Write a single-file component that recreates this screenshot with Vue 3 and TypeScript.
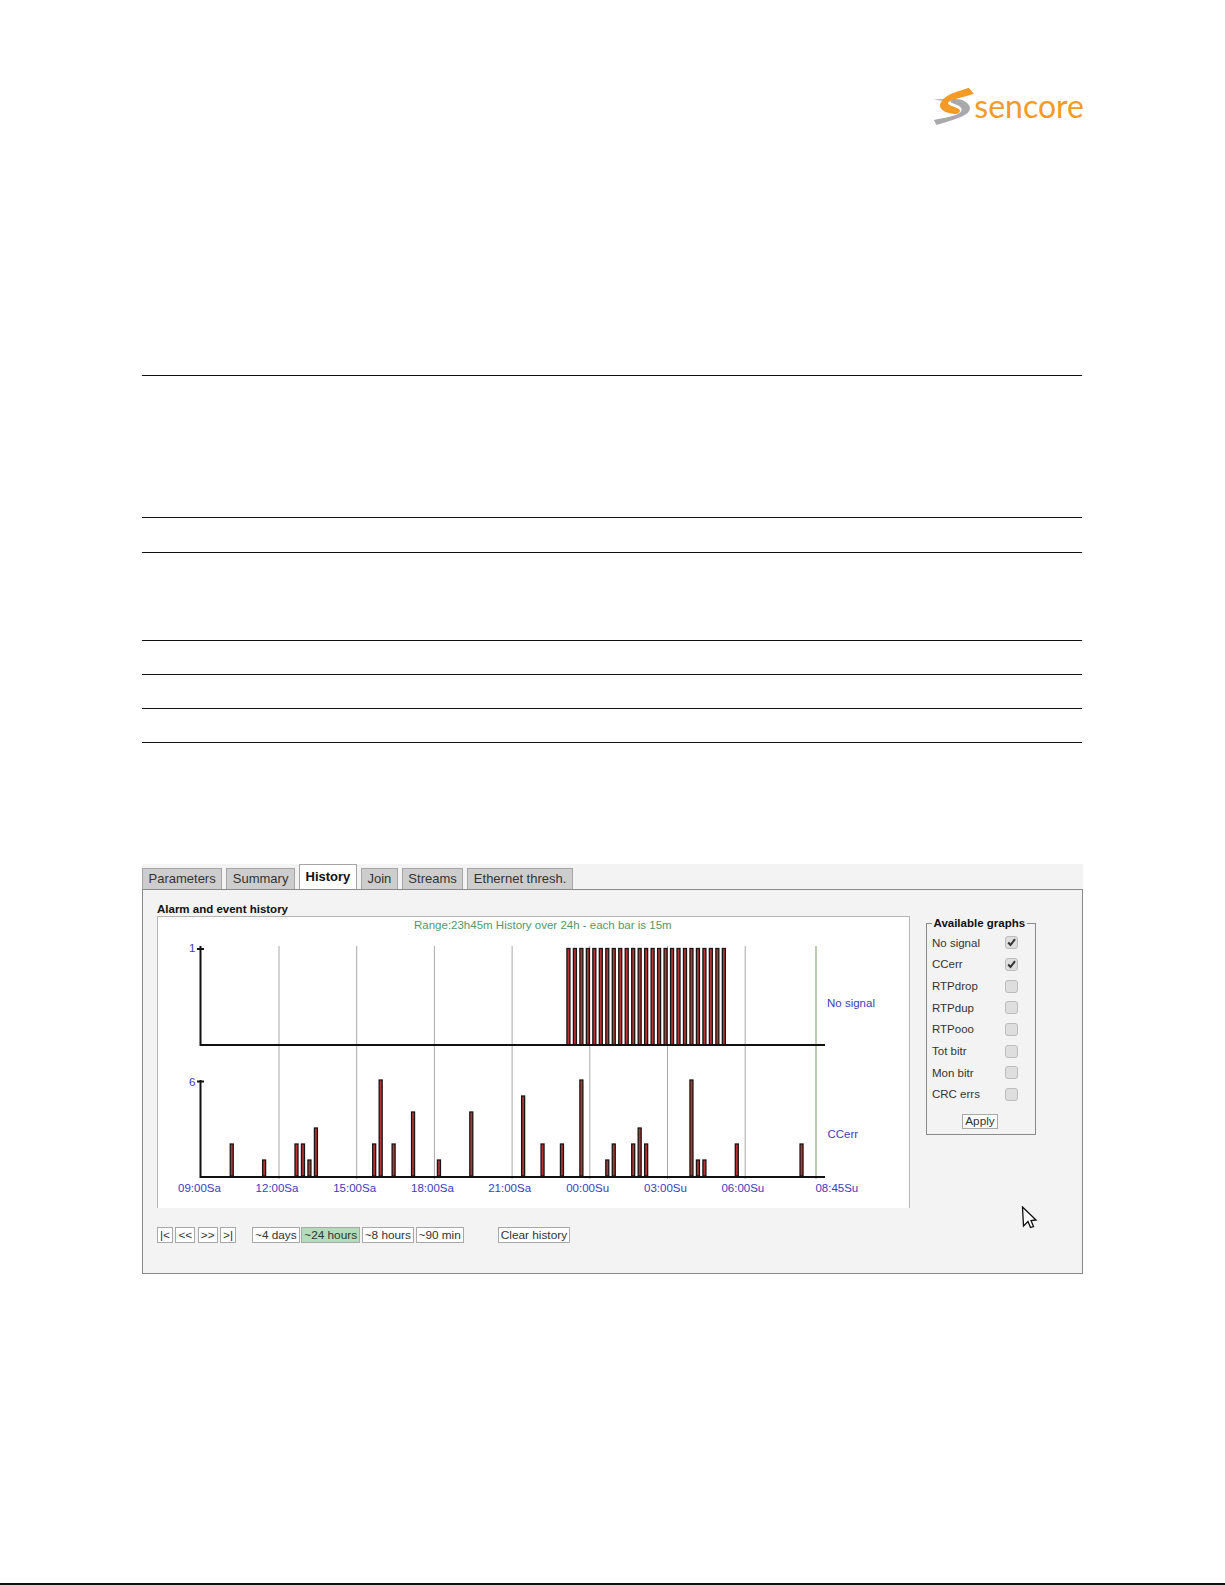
<script setup lang="ts">
// one slot on the time axis is 15 minutes, 3 hours = 77.7px
const slot = 6.475
const axisX = 42.5
const slotX = (n: number) => axisX + slot * (n + 0.5)

const rules = [142, 35, 88, 34, 34, 34]
const tabs = ['Parameters', 'Summary', 'History', 'Join', 'Streams', 'Ethernet thresh.']
const gridXs = [121, 198.7, 276.4, 354.1, 431.8, 509.5, 587.2]
const timeLabels = [
  { x: 20, t: '09:00Sa' },
  { x: 97.6, t: '12:00Sa' },
  { x: 175.2, t: '15:00Sa' },
  { x: 253, t: '18:00Sa' },
  { x: 330.2, t: '21:00Sa' },
  { x: 408.2, t: '00:00Su' },
  { x: 486, t: '03:00Su' },
  { x: 563.4, t: '06:00Su' },
  { x: 657.4, t: '08:45Su' },
]

const signalBars = Array.from({ length: 25 }, (_, i) => 56 + i)
const ccBars: [number, number][] = [
  [4, 2], [9, 1], [14, 2], [15, 2], [16, 1], [17, 3], [26, 2], [27, 6], [29, 2],
  [32, 4], [36, 1], [41, 4], [49, 5], [52, 2], [55, 2], [58, 6], [62, 1], [63, 2],
  [66, 2], [67, 3], [68, 2], [75, 6], [76, 1], [77, 1], [82, 2], [92, 2],
]

const graphs = [
  { name: 'No signal', on: true },
  { name: 'CCerr', on: true },
  { name: 'RTPdrop', on: false },
  { name: 'RTPdup', on: false },
  { name: 'RTPooo', on: false },
  { name: 'Tot bitr', on: false },
  { name: 'Mon bitr', on: false },
  { name: 'CRC errs', on: false },
]
</script>

<template>
  <div class="page">
    <header class="header">
      <div class="logo">
        <svg class="swoosh" width="46" height="44" viewBox="-1.500 0 46 44">
          <path d="M4 15.500 L16 14.800 L14 17 Z" fill="#b4b4b6" />
          <path
            d="M22 15.500 C30 14 37 17 40 22 C42 27 37 31 30 33.500 C22 36.500 13 39 7 41 L4.300 36 C12 34.500 20 33 26 31 C30 29.500 33 27 32 24.500 C30 20.500 24 20.500 21 18 Z"
            fill="#a9a9ac"
          />
          <path
            d="M39.300 3.800 L44.300 9.800 C36 13 28 14 22 16.500 C18 18 17.500 19.500 20.500 21.300 C23.500 22.800 28 23.500 30 25.500 C31.500 28 29 30 25 30 C19 29.500 13.500 27.500 11.500 24.500 C9 21 11.500 16.500 17 12.500 C23 8.500 32 6.500 39.300 3.800 Z"
            fill="#f39a27"
          />
        </svg>
        <span class="wordmark">sencore</span>
      </div>
    </header>

    <section class="rules">
      <div v-for="(h, i) in rules" :key="i" class="rule-row" :style="{ height: h + 'px' }"></div>
    </section>

    <section class="tabview">
      <nav class="tabs">
        <span v-for="t in tabs" :key="t" class="tab" :class="{ active: t === 'History' }">{{ t }}</span>
      </nav>
      <div class="tab-body">
        <div class="main">
          <div class="chart-title">Alarm and event history</div>
          <div class="chart-box">
            <svg class="chart" width="752" height="291" viewBox="0 0 752 291">
              <text x="256" y="11.500" class="range">Range:23h45m History over 24h - each bar is 15m</text>

              <line v-for="x in gridXs" :key="x" :x1="x" :x2="x" y1="29" y2="262" class="grid" />
              <line x1="658" x2="658" y1="29" y2="262" class="grid-end" />

              <g class="bars">
                <rect v-for="n in signalBars" :key="n" :x="slotX(n) + 0.6" y="31.500" width="3" height="96" />
                <rect
                  v-for="b in ccBars"
                  :key="b[0]"
                  :x="slotX(b[0]) + 0.6"
                  :y="259 - b[1] * 16"
                  width="3"
                  :height="b[1] * 16"
                />
              </g>

              <path d="M42.500 29 V128 H667 M39 32 H46" class="axis" />
              <path d="M42.500 163 V260 H667 M39 164.500 H46" class="axis" />

              <text x="31" y="35" class="label">1</text>
              <text x="31" y="169" class="label">6</text>
              <text x="669" y="89.500" class="label">No signal</text>
              <text x="669.500" y="221" class="label">CCerr</text>
              <text v-for="l in timeLabels" :key="l.t" :x="l.x" y="274.500" class="label">{{ l.t }}</text>
            </svg>
          </div>
          <div class="controls">
            <div class="group">
              <button class="btn">|&lt;</button>
              <button class="btn">&lt;&lt;</button>
              <button class="btn">&gt;&gt;</button>
              <button class="btn">&gt;|</button>
            </div>
            <div class="group ranges">
              <button class="btn">~4 days</button>
              <button class="btn current">~24 hours</button>
              <button class="btn">~8 hours</button>
              <button class="btn">~90 min</button>
            </div>
            <div class="group clear">
              <button class="btn">Clear history</button>
            </div>
          </div>
        </div>

        <fieldset class="graphs">
          <legend>Available graphs</legend>
          <div v-for="g in graphs" :key="g.name" class="graph-row">
            <span>{{ g.name }}</span>
            <span class="check">
              <svg v-if="g.on" width="11" height="11" viewBox="0 0 11 11">
                <path d="M2.200 5.500 L4.500 8 L9 2.200" fill="none" stroke="#333" stroke-width="2" />
              </svg>
            </span>
          </div>
          <div class="apply-row"><button class="btn apply">Apply</button></div>
        </fieldset>

        <svg class="cursor" width="18" height="24" viewBox="0 0 18 24">
          <path d="M1.500 1 L15 14 L10 14.500 L12.500 20.500 L9.500 21.500 L7 15.500 L2.500 20 Z" fill="#fff" stroke="#111" stroke-width="1.300" />
        </svg>
      </div>
    </section>

    <footer class="footer"></footer>
  </div>
</template>

<style>
html,
body {
  margin: 0;
  background: #fff;
}
</style>

<style scoped>
.page {
  display: flex;
  flex-direction: column;
  width: 1225px;
  height: 1585px;
  box-sizing: border-box;
  font-family: "Liberation Sans", Arial, sans-serif;
  color: #222;
}

.header {
  height: 375px;
  box-sizing: border-box;
  padding: 84px 141px 0 0;
  display: flex;
  justify-content: flex-end;
}

.logo {
  display: flex;
  align-items: flex-start;
  height: 44px;
}

.wordmark {
  font-family: Lato, "Liberation Sans", sans-serif;
  font-weight: 400;
  font-size: 32px;
  line-height: 32px;
  margin-top: 6px;
  color: #f39a27;
}

.rules {
  margin: 0 143px 0 142px;
  border-top: 1px solid #111;
}

.rule-row {
  box-sizing: border-box;
  border-bottom: 1px solid #111;
}

.tabview {
  margin: 121px 142px 0 142px;
  width: 941px;
}

.tabs {
  display: flex;
  align-items: flex-end;
  gap: 4.100px;
  height: 25px;
  background: #f3f3f3;
}

.tab {
  box-sizing: border-box;
  height: 21px;
  line-height: 20px;
  padding: 0 5.500px;
  font-size: 13px;
  background: #cdcdcd;
  border: 1.300px solid #a6a6a6;
  border-bottom: 0;
  color: #333;
}

.tab.active {
  position: relative;
  height: 26px;
  margin-bottom: -1px;
  line-height: 23px;
  background: #fff;
  font-weight: 700;
  color: #111;
}

.tab-body {
  position: relative;
  box-sizing: border-box;
  display: flex;
  height: 385px;
  padding: 11px 0 0 14px;
  background: #f3f3f3;
  border: 1px solid #8a8a8a;
}

.main {
  width: 753px;
}

.chart-title {
  height: 15px;
  line-height: 16px;
  font-size: 11.500px;
  font-weight: 700;
  color: #111;
}

.chart-box {
  box-sizing: border-box;
  width: 753px;
  height: 292px;
  background: #fff;
  border: 1px solid #b5b5b5;
  border-bottom: 0;
}

.chart {
  display: block;
}

.range {
  font-size: 11.500px;
  fill: #4f9a68;
}

.label {
  font-size: 11.500px;
  fill: #3c3cc0;
}

.grid {
  stroke: #a8a8a8;
  stroke-width: 1;
}

.grid-end {
  stroke: #86ad80;
  stroke-width: 1.200;
}

.bars rect {
  fill: #b83434;
  stroke: #161616;
  stroke-width: 1.300;
}

.axis {
  fill: none;
  stroke: #111;
  stroke-width: 2;
}

.controls {
  display: flex;
  margin-top: 19px;
}

.group {
  display: flex;
  gap: 2.500px;
  margin-right: 16px;
}

.group.ranges {
  gap: 1.600px;
}

.group.clear {
  margin-left: 18px;
}

.btn {
  box-sizing: border-box;
  height: 16px;
  margin: 0;
  padding: 0 2px;
  font-family: inherit;
  font-size: 11.800px;
  line-height: 13px;
  color: #333;
  background: #fff;
  border: 1.300px solid #a8a8a8;
  border-radius: 0;
}

.btn.current {
  background: #b2dcba;
}

.graphs {
  box-sizing: border-box;
  width: 110px;
  height: 219px;
  margin: 15px 0 0 15.500px;
  padding: 2px 0 0 5.500px;
  border: 1.300px solid #8a8a8a;
  font-size: 11.500px;
  min-width: 0;
}

.graphs legend {
  padding: 0 1.500px;
  margin-left: 0;
  font-weight: 700;
  line-height: 14px;
  color: #111;
}

.graph-row {
  display: flex;
  align-items: center;
  justify-content: space-between;
  width: 85.500px;
  height: 21.670px;
  color: #333;
}

.check {
  box-sizing: border-box;
  display: flex;
  align-items: center;
  justify-content: center;
  width: 13px;
  height: 13px;
  background: #dedede;
  border: 1px solid #bcbcbc;
  border-radius: 3px;
}

.apply-row {
  display: flex;
  justify-content: center;
  width: 96px;
  margin-top: 9px;
}

.btn.apply {
  height: 15px;
  padding: 0 2px;
}

.cursor {
  position: absolute;
  left: 878px;
  top: 316px;
}

.footer {
  margin-top: auto;
  height: 2px;
  background: #111;
}
</style>
